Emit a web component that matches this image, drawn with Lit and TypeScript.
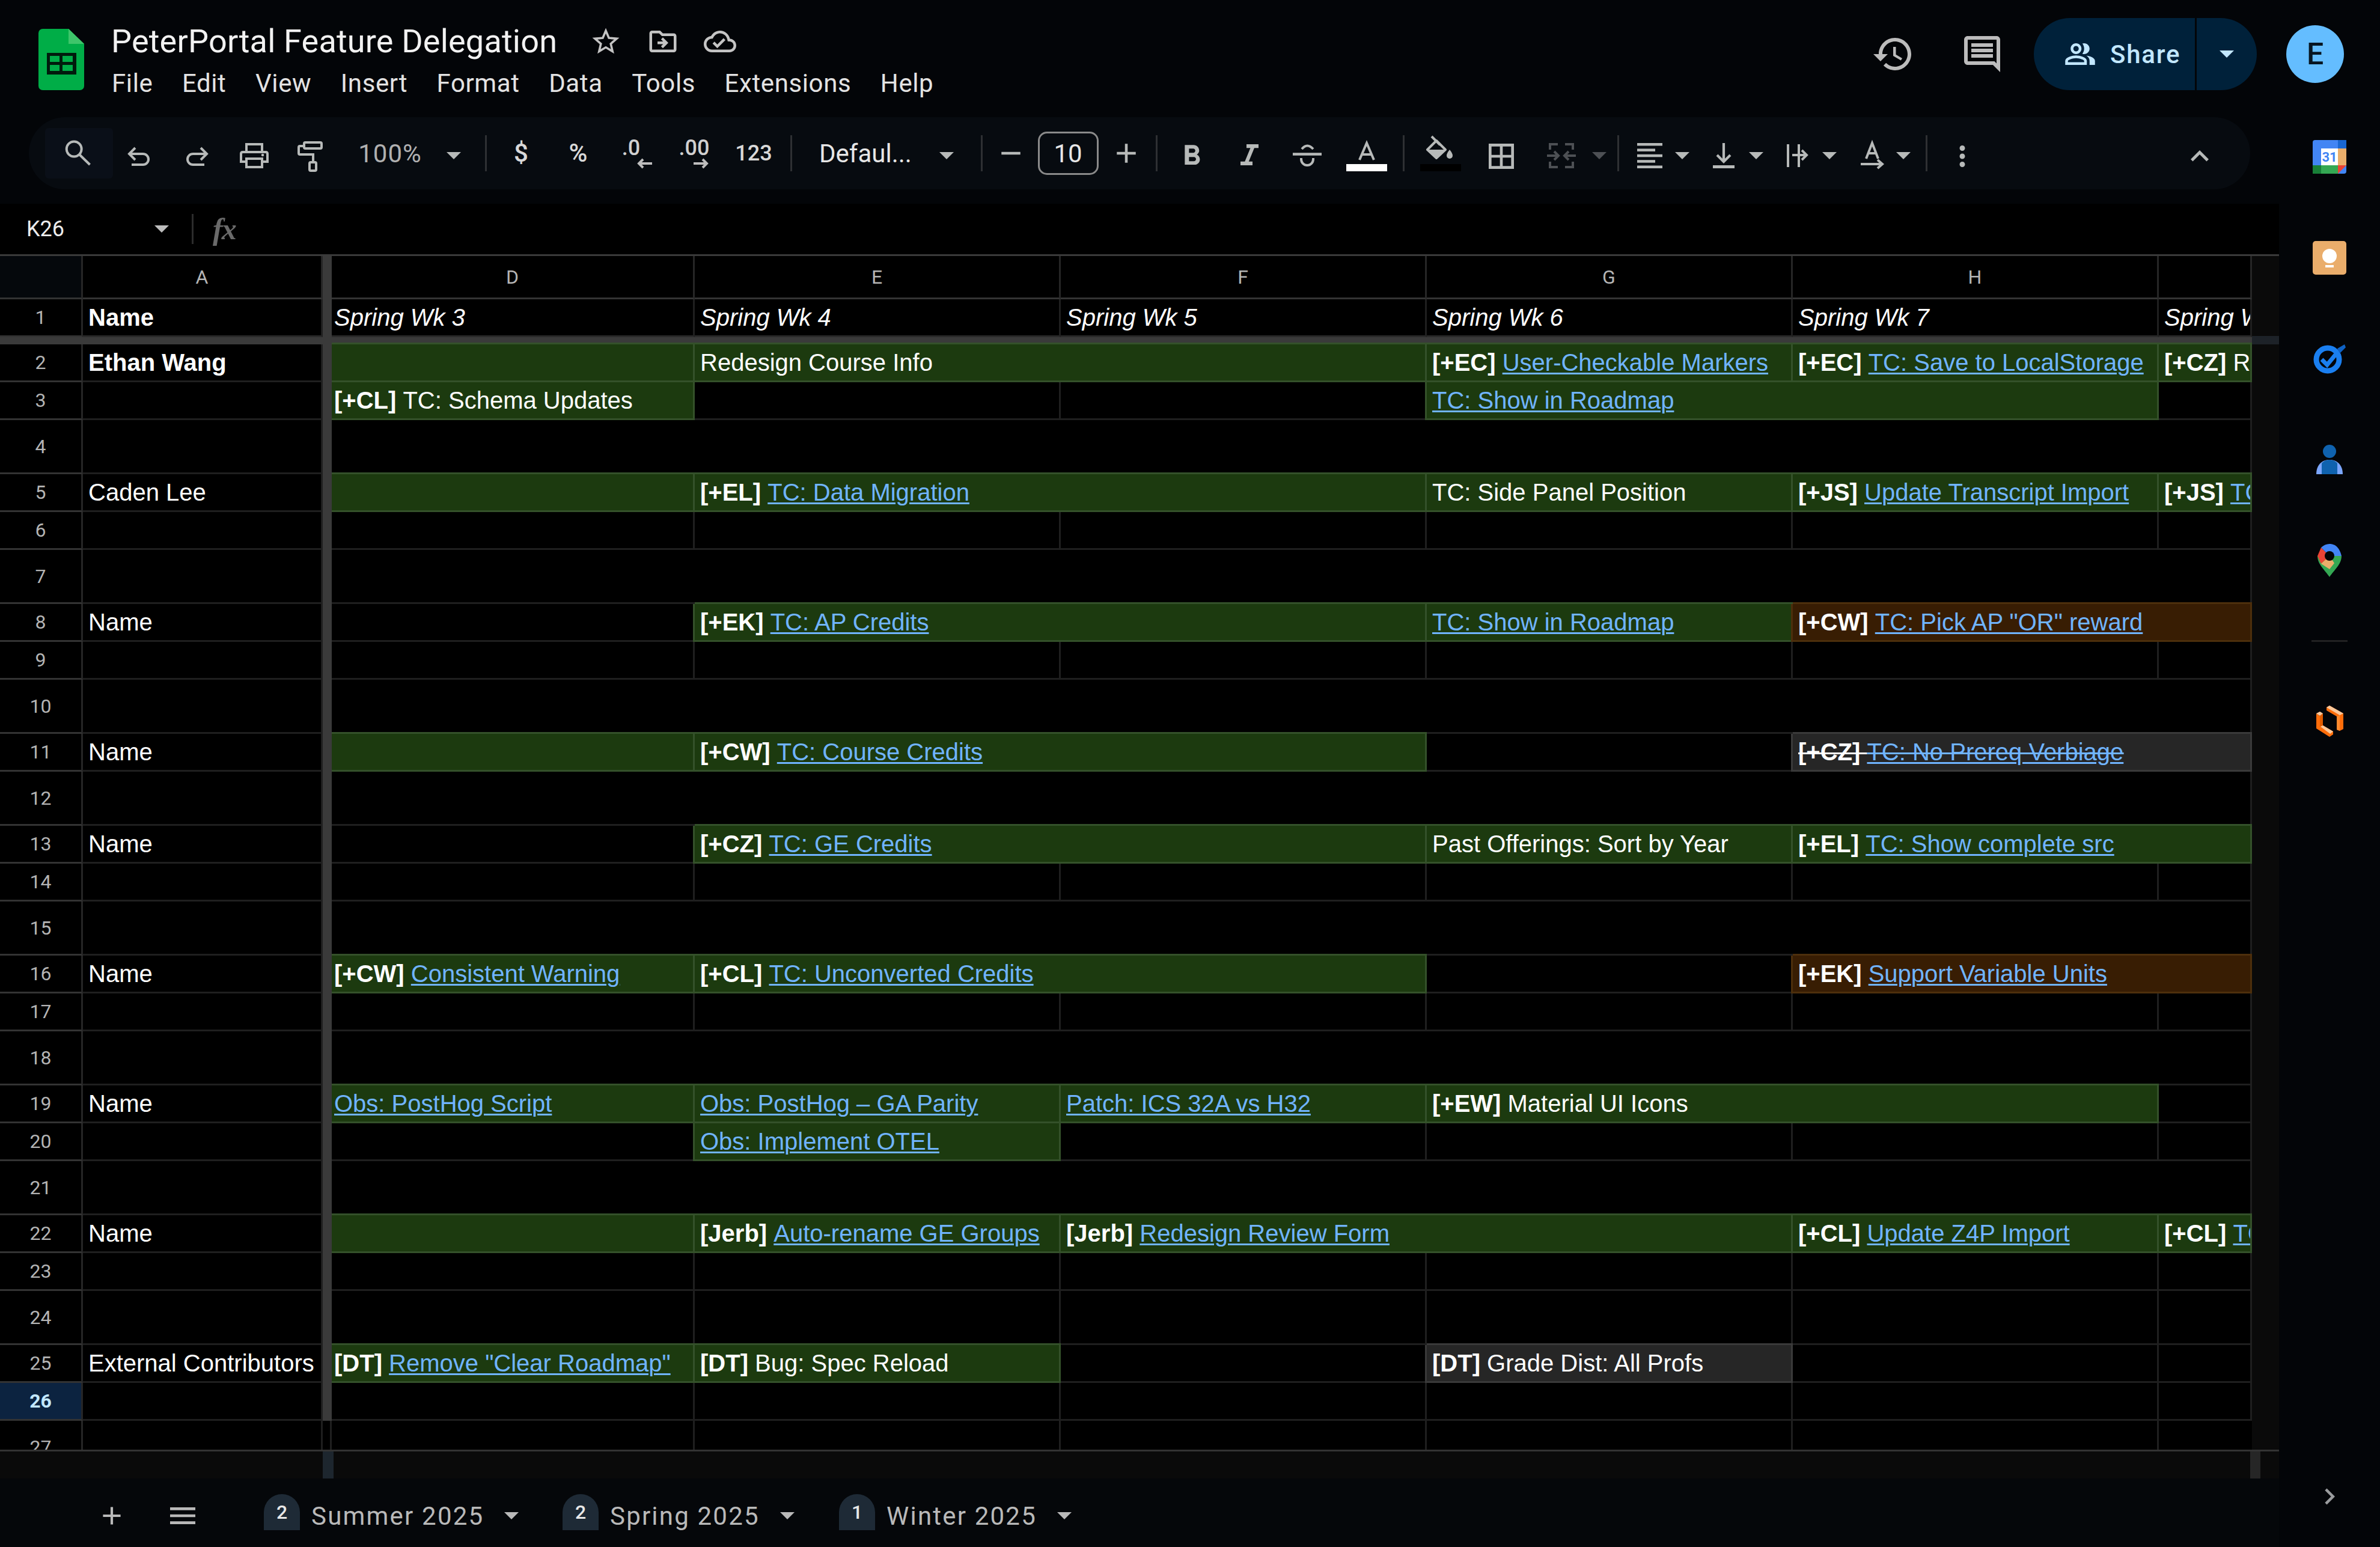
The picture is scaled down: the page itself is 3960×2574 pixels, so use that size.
import { LitElement, html, css, nothing } from "lit";
import { customElement } from "lit/decorators.js";

const P: Record<string, string> = {
  bold: "M15.6 10.79c.97-.67 1.65-1.77 1.65-2.79 0-2.26-1.75-4-4-4H7v14h7.04c2.09 0 3.71-1.7 3.71-3.79 0-1.52-.86-2.82-2.15-3.42zM10 6.5h3c.83 0 1.5.67 1.5 1.5s-.67 1.5-1.5 1.5h-3v-3zm3.5 9H10v-3h3.5c.83 0 1.5.67 1.5 1.5s-.67 1.5-1.5 1.5z",
  italic: "M10 4v2.500h2.600l-3.700 9H6V18h8v-2.500h-2.500l3.700-9H18V4z",
  borders: "M3 3v18h18V3H3zm8 16H5v-6h6v6zm0-8H5V5h6v6zm8 8h-6v-6h6v6zm0-8h-6V5h6v6z",
  more: "M12 8c1.1 0 2-.9 2-2s-.9-2-2-2-2 .9-2 2 .9 2 2 2zm0 2c-1.1 0-2 .9-2 2s.9 2 2 2 2-.9 2-2-.9-2-2-2zm0 6c-1.1 0-2 .9-2 2s.9 2 2 2 2-.9 2-2-.9-2-2-2z",
  less: "M12 8l-6 6 1.41 1.41L12 10.83l4.59 4.58L18 14z",
  right: "M8.59 16.59L13.17 12 8.59 7.41 10 6l6 6-6 6z",
  history: "M13 3c-4.97 0-9 4.03-9 9H1l3.89 3.89.07.14L9 12H6c0-3.87 3.13-7 7-7s7 3.13 7 7-3.13 7-7 7c-1.93 0-3.68-.79-4.94-2.06l-1.42 1.42C8.27 19.99 10.51 21 13 21c4.97 0 9-4.03 9-9s-4.03-9-9-9zm-1 5v5l4.28 2.54.72-1.21-3.5-2.08V8H12z",
  comment: "M22 4c0-1.1-.9-2-2-2H4c-1.1 0-2 .9-2 2v12c0 1.1.9 2 2 2h14l4 4V4zm-2 13.17L18.83 16H4V4h16v13.17zM18 6H6v2h12zm0 3H6v2h12zm0 3H6v2h12z",
  people: "M16.67 13.13C18.04 14.06 19 15.32 19 17v3h4v-3c0-2.18-3.57-3.47-6.33-3.87zM15 12c2.21 0 4-1.79 4-4s-1.79-4-4-4c-.47 0-.91.1-1.33.24C14.5 5.27 15 6.58 15 8s-.5 2.73-1.33 3.76c.42.14.86.24 1.33.24zM9 12c2.21 0 4-1.79 4-4s-1.79-4-4-4-4 1.79-4 4 1.79 4 4 4zm0-6c1.1 0 2 .9 2 2s-.9 2-2 2-2-.9-2-2 .9-2 2-2zM9 13c-2.67 0-8 1.34-8 4v3h16v-3c0-2.66-5.33-4-8-4zm6 5H3v-.99C3.2 16.29 6.3 15 9 15s5.8 1.29 6 2v1z",
  star: "M22 9.24l-7.19-.62L12 2 9.19 8.63 2 9.24l5.46 4.73L5.82 21 12 17.27 18.18 21l-1.63-7.03L22 9.24zM12 15.4l-3.76 2.27 1-4.28-3.32-2.88 4.38-.38L12 6.1l1.71 4.04 4.38.38-3.32 2.88 1 4.28L12 15.4z",
  move: "M20 6h-8l-2-2H4c-1.1 0-1.99.9-1.99 2L2 18c0 1.1.9 2 2 2h16c1.1 0 2-.9 2-2V8c0-1.1-.9-2-2-2zm0 12H4V6h5.17l2 2H20v10zm-8.01-9l-1.41 1.41L12.16 12H8v2h4.16l-1.59 1.59L11.99 17 16 13.01 11.99 9z",
  cloud: "M19.35 10.04C18.67 6.59 15.64 4 12 4 9.11 4 6.6 5.64 5.35 8.04 2.34 8.36 0 10.91 0 14c0 3.31 2.69 6 6 6h13c2.76 0 5-2.24 5-5 0-2.64-2.05-4.78-4.65-4.96zM19 18H6c-2.21 0-4-1.79-4-4 0-2.05 1.53-3.76 3.56-3.97l1.07-.11.5-.95C8.08 7.14 9.94 6 12 6c2.62 0 4.88 1.86 5.39 4.43l.3 1.5 1.53.11c1.56.1 2.78 1.41 2.78 2.96 0 1.65-1.35 3-3 3zm-9-3.82l-2.09-2.09L6.5 13.5 10 17l6.01-6.01-1.41-1.41z",
  plus: "M19 13h-6v6h-2v-6H5v-2h6V5h2v6h6z",
  minus: "M19 13H5v-2h14z",
  menu: "M3 18h18v-2H3v2zm0-5h18v-2H3v2zm0-7v2h18V6H3z",
};

const ic = (n: string, cls = "i60") =>
  html`<svg class="${cls}" viewBox="0 0 24 24" fill="currentColor"><path d="${P[n]}"></path></svg>`;
const caret = () => html`<svg class="caret" viewBox="0 0 24 12" fill="currentColor"><path d="M0 0h24L12 12z"></path></svg>`;

const searchI = html`<svg class="s54" viewBox="0 0 54 54"><g class="st"><circle cx="23.200" cy="20" r="12.500"></circle><path d="M31.500 28.500L49.500 46"></path></g></svg>`;
const undoI = (cls = "") => html`<svg class="s54 ${cls}" viewBox="0 0 54 54"><g class="st"><path d="M21 18L11 28l10 10"></path><path d="M11 28h23a9 9 0 0 1 0 18H15"></path></g></svg>`;
const printI = html`<svg class="s54" viewBox="0 0 54 54"><g class="st"><path d="M14 25V12h26v13"></path><path d="M12 41H5V28q0-3 3-3h38q3 0 3 3v13h-7"></path><rect x="14" y="36" width="26" height="14"></rect></g><circle cx="41" cy="30" r="2.300" fill="currentColor"></circle></svg>`;
const rollerI = html`<svg class="s60" viewBox="0 0 60 60"><g class="st"><rect x="19" y="12" width="29" height="10" rx="2"></rect><path d="M17 18h-5q-2 0-2 2v10q0 2 2 2h22v11"></path><rect x="28" y="45" width="11" height="14" rx="2"></rect></g></svg>`;
const strikeI = html`<svg class="s54" viewBox="0 0 54 54"><g class="st"><path d="M3 28.500h48" stroke-width="4.500"></path><path d="M18 20Q27 9 37 20"></path><path d="M17 35v2a10 10 0 0 0 20 0v-2"></path></g></svg>`;
const colorA = html`<svg class="aI" viewBox="0 0 28 30"><g class="st" stroke-width="4.200"><path d="M2 30L14 2l12 28"></path><path d="M7 21h14"></path></g></svg>`;
const bucket = html`<svg class="bI" viewBox="0 0 56 48"><g class="st"><path d="M21 9L6 24l15 14 15-14z" stroke-linejoin="round"></path><path d="M13 2l14 14"></path></g><path d="M6 24h30L21 38zM43 24q-5 6-5 10a5 5 0 0 0 10 0q0-4-5-10z" fill="currentColor"></path></svg>`;
const mergeI = html`<svg class="s54 d4 mergeS" viewBox="0 0 54 54"><g class="st"><path d="M21 8H8v9M33 8h13v9M21 46H8v-9M33 46h13v-9"></path><path d="M3 27h18M15 20l7 7-7 7M51 27H33M39 20l-7 7 7 7"></path></g></svg>`;
const alignI = html`<svg class="d4" width="42" height="42" viewBox="0 0 42 42" fill="currentColor"><rect width="42" height="4.500"></rect><rect y="9.400" width="30" height="4.500"></rect><rect y="18.800" width="42" height="4.500"></rect><rect y="28.200" width="30" height="4.500"></rect><rect y="37.500" width="42" height="4.500"></rect></svg>`;
const valignI = html`<svg class="d4" width="36" height="42" viewBox="0 0 36 42"><rect y="37" width="36" height="5" fill="currentColor"></rect><g class="st"><path d="M18 0v29M7 20l11 11 11-11" stroke-width="4.200"></path></g></svg>`;
const wrapI = html`<svg class="d4" width="36" height="42" viewBox="0 0 36 42"><g class="st" stroke-width="3.500"><path d="M2 2v38M20 2v38"></path></g><g class="st"><path d="M9 20h22M25 12l8 8-8 8"></path></g></svg>`;
const rotateI = html`<svg class="d4" width="40" height="44" viewBox="0 0 40 44"><g class="st" stroke-width="3.600"><path d="M9 27L19 1l10 26M13 18h12"></path><path d="M0 36h34M28 29l8 7-8 7"></path></g></svg>`;

type Tool = { cx: number; w: number; c: unknown; k?: string };

const ARROW_L = html`<svg class="dArrow" viewBox="0 0 26 18"><g class="st"><path d="M26 9H4M11 2L4 9l7 7"></path></g></svg>`;
const ARROW_R = html`<svg class="dArrow" viewBox="0 0 26 18"><g class="st"><path d="M0 9h22M15 2l7 7-7 7"></path></g></svg>`;

const tools: Tool[] = [
  { cx: 131.5, w: 113, k: "hl", c: searchI },
  { cx: 231, w: 54, c: undoI() },
  { cx: 328, w: 54, c: undoI("flip") },
  { cx: 423, w: 54, c: printI },
  { cx: 517, w: 60, c: rollerI },
  { cx: 649, w: 110, k: "txt dim", c: "100%" },
  { cx: 755, w: 26, c: caret() },
  { cx: 808, w: 3, k: "sep", c: nothing },
  { cx: 867, w: 50, k: "txt sym", c: "$" },
  { cx: 962, w: 50, k: "txt sym", c: "%" },
  { cx: 1058, w: 60, k: "dec left", c: html`<span>.0</span>${ARROW_L}` },
  { cx: 1155, w: 70, k: "dec right", c: html`<span>.00</span>${ARROW_R}` },
  { cx: 1254, w: 60, k: "txt num", c: "123" },
  { cx: 1316, w: 3, k: "sep", c: nothing },
  { cx: 1443, w: 160, k: "txt bright", c: "Defaul..." },
  { cx: 1575, w: 26, c: caret() },
  { cx: 1633, w: 3, k: "sep", c: nothing },
  { cx: 1682, w: 54, c: ic("minus", "i54") },
  { cx: 1777, w: 101, k: "fsize", c: "10" },
  { cx: 1874, w: 54, c: ic("plus", "i54") },
  { cx: 1924, w: 3, k: "sep", c: nothing },
  { cx: 1983, w: 56, c: ic("bold", "i56 down") },
  { cx: 2079, w: 60, c: ic("italic", "i60 down") },
  { cx: 2175, w: 54, c: strikeI },
  { cx: 2274, w: 68, k: "swatch white", c: html`${colorA}<i></i>` },
  { cx: 2335, w: 3, k: "sep", c: nothing },
  { cx: 2397, w: 68, k: "swatch black", c: html`${bucket}<i></i>` },
  { cx: 2498, w: 56, c: ic("borders", "i56 down") },
  { cx: 2598, w: 54, k: "off", c: mergeI },
  { cx: 2661, w: 26, k: "off", c: caret() },
  { cx: 2692, w: 3, k: "sep", c: nothing },
  { cx: 2745, w: 42, c: alignI },
  { cx: 2799, w: 26, c: caret() },
  { cx: 2868, w: 36, c: valignI },
  { cx: 2922, w: 26, c: caret() },
  { cx: 2991, w: 36, c: wrapI },
  { cx: 3044, w: 26, c: caret() },
  { cx: 3116, w: 40, c: rotateI },
  { cx: 3167, w: 26, c: caret() },
  { cx: 3205, w: 3, k: "sep", c: nothing },
  { cx: 3265, w: 54, c: ic("more", "i54 down") },
  { cx: 3660, w: 60, c: ic("less", "i60 down") },
];

type Seg = { t: string; b?: boolean; l?: boolean };
type Cell = { col: number; span?: number; fill?: "g" | "o" | "k"; segs?: Seg[] };

const tag = (b: string, link: string): Seg[] => [{ t: b + " ", b: true }, { t: link, l: true }];
const plain = (b: string, t: string): Seg[] => [{ t: b + " ", b: true }, { t }];

// cols: 0=D 1=E 2=F 3=G 4=H 5=I
const rows: Record<number, { a?: string; ab?: boolean; cells?: Cell[] }> = {
  2: { a: "Ethan Wang", ab: true, cells: [
    { col: 0, fill: "g" },
    { col: 1, span: 2, fill: "g", segs: [{ t: "Redesign Course Info" }] },
    { col: 3, fill: "g", segs: tag("[+EC]", "User-Checkable Markers") },
    { col: 4, fill: "g", segs: tag("[+EC]", "TC: Save to LocalStorage") },
    { col: 5, fill: "g", segs: plain("[+CZ]", "Redesign") },
  ] },
  3: { cells: [
    { col: 0, fill: "g", segs: plain("[+CL]", "TC: Schema Updates") },
    { col: 3, span: 2, fill: "g", segs: [{ t: "TC: Show in Roadmap", l: true }] },
  ] },
  4: { cells: [{ col: 0, span: 6 }] },
  5: { a: "Caden Lee", cells: [
    { col: 0, fill: "g" },
    { col: 1, span: 2, fill: "g", segs: tag("[+EL]", "TC: Data Migration") },
    { col: 3, fill: "g", segs: [{ t: "TC: Side Panel Position" }] },
    { col: 4, fill: "g", segs: tag("[+JS]", "Update Transcript Import") },
    { col: 5, fill: "g", segs: tag("[+JS]", "TC: Import") },
  ] },
  7: { cells: [{ col: 0, span: 6 }] },
  8: { a: "Name", cells: [
    { col: 1, span: 2, fill: "g", segs: tag("[+EK]", "TC: AP Credits") },
    { col: 3, fill: "g", segs: [{ t: "TC: Show in Roadmap", l: true }] },
    { col: 4, span: 2, fill: "o", segs: tag("[+CW]", 'TC: Pick AP "OR" reward') },
  ] },
  10: { cells: [{ col: 0, span: 6 }] },
  11: { a: "Name", cells: [
    { col: 0, fill: "g" },
    { col: 1, span: 2, fill: "g", segs: tag("[+CW]", "TC: Course Credits") },
    { col: 4, span: 2, fill: "k", segs: tag("[+CZ]", "TC: No Prereq Verbiage") },
  ] },
  12: { cells: [{ col: 0, span: 6 }] },
  13: { a: "Name", cells: [
    { col: 1, span: 2, fill: "g", segs: tag("[+CZ]", "TC: GE Credits") },
    { col: 3, fill: "g", segs: [{ t: "Past Offerings: Sort by Year" }] },
    { col: 4, span: 2, fill: "g", segs: tag("[+EL]", "TC: Show complete src") },
  ] },
  15: { cells: [{ col: 0, span: 6 }] },
  16: { a: "Name", cells: [
    { col: 0, fill: "g", segs: tag("[+CW]", "Consistent Warning") },
    { col: 1, span: 2, fill: "g", segs: tag("[+CL]", "TC: Unconverted Credits") },
    { col: 4, span: 2, fill: "o", segs: tag("[+EK]", "Support Variable Units") },
  ] },
  18: { cells: [{ col: 0, span: 6 }] },
  19: { a: "Name", cells: [
    { col: 0, fill: "g", segs: [{ t: "Obs: PostHog Script", l: true }] },
    { col: 1, fill: "g", segs: [{ t: "Obs: PostHog – GA Parity", l: true }] },
    { col: 2, fill: "g", segs: [{ t: "Patch: ICS 32A vs H32", l: true }] },
    { col: 3, span: 2, fill: "g", segs: plain("[+EW]", "Material UI Icons") },
  ] },
  20: { cells: [{ col: 1, fill: "g", segs: [{ t: "Obs: Implement OTEL", l: true }] }] },
  21: { cells: [{ col: 0, span: 6 }] },
  22: { a: "Name", cells: [
    { col: 0, fill: "g" },
    { col: 1, fill: "g", segs: tag("[Jerb]", "Auto-rename GE Groups") },
    { col: 2, span: 2, fill: "g", segs: tag("[Jerb]", "Redesign Review Form") },
    { col: 4, fill: "g", segs: tag("[+CL]", "Update Z4P Import") },
    { col: 5, fill: "g", segs: tag("[+CL]", "TC: Import") },
  ] },
  25: { a: "External Contributors", cells: [
    { col: 0, fill: "g", segs: tag("[DT]", 'Remove "Clear Roadmap"') },
    { col: 1, fill: "g", segs: plain("[DT]", "Bug: Spec Reload") },
    { col: 3, fill: "k", segs: plain("[DT]", "Grade Dist: All Profs") },
  ] },
};

const colTitles = ["D", "E", "F", "G", "H", ""];
const weeks = ["Spring Wk 3", "Spring Wk 4", "Spring Wk 5", "Spring Wk 6", "Spring Wk 7", "Spring Wk 8"];

@customElement("app-root")
export class AppRoot extends LitElement {
  static styles = css`
    :host { display: block; width: 3960px; height: 2574px; background: #030508; color: #fff; font-family: Roboto, "Liberation Sans", sans-serif; overflow: hidden; }
    svg { display: block; flex: none; overflow: visible; }
    .st { fill: none; stroke: currentColor; stroke-width: 4; }
    .i60, .s60 { width: 60px; height: 60px; }
    .i56 { width: 56px; height: 56px; }
    .i54, .s54 { width: 54px; height: 54px; }
    .down { transform: translateY(5px); }
    .d4 { transform: translateY(4px); }
    .flip { transform: scaleX(-1); }
    .caret { width: 24px; height: 12px; margin: 0 auto; }
    .toolbar .caret { transform: translateY(4px); }

    .top { height: 195px; display: flex; box-sizing: border-box; }
    .logo { width: 76px; height: 102px; margin: 48px 0 0 64px; flex: none; }
    .titles { margin-left: 45px; display: flex; flex-direction: column; flex: none; }
    .titleRow { display: flex; align-items: center; margin-top: 39px; height: 60px; }
    .title { font-size: 54px; font-weight: 400; letter-spacing: .2px; color: #f2f2f2; width: 740px; white-space: nowrap; line-height: 60px; }
    .tIcons { display: flex; gap: 41px; margin-left: 56px; color: #c4c4c4; }
    .menu { display: flex; margin-top: 13px; font-size: 42px; line-height: 54px; color: #e3e3e3; gap: 48.6px; margin-left: 1px; letter-spacing: .6px; }
    .tright { margin-left: auto; display: flex; align-items: center; height: 120px; margin-top: 30px; }
    .tright .hi { color: #bcbcbc; }
    .hist { width: 72px; height: 72px; margin-right: 76px; }
    .comm { width: 72px; height: 72px; margin-right: 50px; }
    .share { width: 371px; height: 120px; border-radius: 60px; background: #00213a; display: flex; align-items: center; color: #c2e7ff; }
    .shareMain { width: 271px; height: 120px; box-sizing: border-box; display: flex; align-items: center; padding-left: 50px; gap: 23px; font-size: 42px; font-weight: 500; border-right: 3px solid #030508; letter-spacing: 1.8px; }
    .shareArrow { flex: 1; display: flex; align-items: center; justify-content: center; }
    .avatar { width: 96px; height: 96px; border-radius: 50%; background: #64bdff; color: #071521; margin: 0 60px 0 49px; display: flex; align-items: center; justify-content: center; font-size: 50px; font-weight: 500; }

    .body { display: flex; height: 2379px; }
    .ws { width: 3792px; display: flex; flex-direction: column; flex: none; }
    .toolbar { height: 120px; margin: 0 48px 24px; border-radius: 60px; background: #070b10; display: flex; align-items: center; color: #b7bab9; flex: none; }
    .tool { flex: none; display: flex; align-items: center; justify-content: center; height: 100%; }
    .hl { background: #0a0f18; height: 84px; padding-right: 10px; box-sizing: border-box; border-radius: 6px; }
    .sep { width: 3px; height: 60px; background: #2e3033; }
    .txt { font-size: 42px; white-space: nowrap; }
    .dim { color: #b0b0b0; letter-spacing: 1px; }
    .sym { font-weight: 500; color: #d8d8d8; transform: translateY(-1px); }
    .num { font-size: 36px; font-weight: 500; color: #d8d8d8; }
    .bright { color: #e6e6e6; justify-content: flex-start; }
    .dec { flex-direction: column; font-size: 36px; font-weight: 500; color: #d0d0d0; line-height: 30px; padding-top: 2px; box-sizing: border-box; }
    .dec span { display: block; }
    .dArrow { width: 26px; height: 18px; margin-top: 2px; color: #bdbdbd; }
    .dec.left .dArrow { transform: translateX(14px); }
    .dec.left span { transform: translateX(-8px); }
    .dec.right .dArrow { transform: translateX(12px); }
    .fsize { border: 3px solid #8a8a8a; border-radius: 15px; height: 72px; box-sizing: border-box; font-size: 42px; color: #e6e6e6; }
    .swatch { flex-direction: column; justify-content: flex-end; padding-bottom: 30px; box-sizing: border-box; }
    .swatch i { display: block; width: 68px; height: 12px; }
    .swatch.white i { background: #fff; }
    .swatch.black i { background: #000; }
    .aI { width: 28px; height: 30px; margin-bottom: 7px; }
    .bI { width: 56px; height: 48px; }
    .off { color: #4d5054; }

    .formula { height: 84px; background: #000; display: flex; align-items: center; flex: none; }
    .nameBox { width: 319px; display: flex; align-items: center; box-sizing: border-box; padding-left: 44px; font-size: 36px; color: #ececec; }
    .nameBox span { flex: 1; }
    .nameBox .caret { margin: 0 38px 0 0; color: #bdbdbd; }
    .fdiv { width: 3px; height: 50px; background: #2c2c2c; }
    .fx { margin-left: 32px; font-family: "Liberation Serif", serif; font-style: italic; font-size: 50px; color: #6a6a6a; font-weight: 700; letter-spacing: -2px; }

    .gridWrap { display: flex; height: 1992px; border-top: 3px solid #3a3a3a; flex: none; box-sizing: border-box; }
    .gridBox { width: 3747px; flex: none; overflow: hidden; }
    .vtrack { flex: 1; background: #0a0a0a; display: flex; flex-direction: column; }
    .vtrack i { display: block; height: 14px; margin-top: 133px; background: #1d2228; }
    .grid { display: grid; grid-template-columns: 138px 399px 15px 604px 609px 609px 609px 609px 155px;
      grid-template-rows: 72px 63px 12px repeat(3, 63px 63px 90px) 63px 90px repeat(5, 63px 63px 90px); background: #000; font-family: "Liberation Sans", Arial, sans-serif; font-size: 40px; line-height: 46px; }
    .freeze { grid-column: 3; grid-row: 1 / span 28; background: #3a3a3a; }
    .bar { grid-column: 1 / -1; grid-row: 3; background: #3a3a3a; }
    .hd { display: flex; align-items: center; justify-content: center; color: #b4b4b4; font-family: Roboto, sans-serif; font-size: 32px; box-sizing: border-box; border-right: 3px solid #262626; border-bottom: 3px solid #333; line-height: 1; }
    .corner { background: #05080c; }
    .sel { background: #0c2340; color: #c2e7ff; font-weight: 700; }
    .c { box-sizing: border-box; border-right: 3px solid #1f1f1f; border-bottom: 3px solid #1f1f1f; display: flex; align-items: flex-end; padding: 0 0 7px 9px; white-space: pre; overflow: hidden; color: #fff; min-width: 0; }
    .r1 { border-bottom-color: #2a2a2a; font-style: italic; }
    .colD { padding-left: 4px; }
    .strong { font-weight: 700; font-style: normal; }
    .span2 { grid-column: span 2; }
    .span6 { grid-column: span 6; }
    .g { background: #1c3a0f; border-color: #34512a; box-shadow: 0 -3px 0 #34512a, -3px 0 0 #34512a; }
    .o { background: #381d03; border-color: #4d2f0c; box-shadow: 0 -3px 0 #4d2f0c, -3px 0 0 #4d2f0c; }
    .k { background: #262626; border-color: #3a3a3a; box-shadow: 0 -3px 0 #3a3a3a, -3px 0 0 #3a3a3a; }
    .c.colD.g { box-shadow: 0 -3px 0 #34512a; }
    .c b { font-weight: 700; }
    .c a { color: #70b4ff; text-decoration: underline; text-decoration-thickness: 3px; text-underline-offset: 3px; }
    .struck { text-decoration: line-through; text-decoration-thickness: 3px; }
    .struck a { text-decoration: underline line-through; text-decoration-thickness: 3px; }

    .hline { height: 3px; background: #333; flex: none; margin-top: -3px; position: relative; }
    .hscroll { height: 45px; background: #0a0a0a; flex: none; display: flex; }
    .hscroll .f { width: 18px; margin-left: 537px; background: #1d262e; }
    .hscroll .e { width: 17px; margin-left: 3189px; background: #262626; }
    .tabs { height: 114px; flex: none; display: flex; align-items: center; background: #05070a; color: #b9b9b9; padding: 10px 0 0 161px; box-sizing: border-box; }
    .tabPlus { width: 50px; height: 50px; }
    .tabMenu { width: 56px; height: 56px; margin-left: 65px; margin-right: 107px; }
    .tab { display: flex; align-items: center; font-size: 42px; letter-spacing: 2.2px; height: 60px; white-space: nowrap; }
    .badge { width: 60px; height: 60px; border-radius: 30px 30px 0 0; background: #1e2a36; color: #e8e8e8; display: flex; align-items: center; justify-content: center; font-size: 32px; font-weight: 500; margin-right: 19px; letter-spacing: 0; transform: translateY(-6px); flex: none; }
    .tab .caret { margin: 0 0 0 34px; }
    .t1 { width: 497px; }
    .t2 { width: 460px; }

    .side { flex: 1; display: flex; flex-direction: column; align-items: center; padding-top: 38px; }
    .sIcon { display: block; flex: none; }
    .mb112 { margin-bottom: 112px; }
    .mb115 { margin-bottom: 115px; }
    .mb118 { margin-bottom: 118px; }
    .mb116 { margin-bottom: 116px; }
    .sideDiv { width: 60px; height: 3px; background: #222; margin: 105px 0 106px; flex: none; }
    .sideSpacer { flex: 1; }
    .sideChev { color: #9a9c9e; width: 54px; height: 54px; margin-bottom: 57px; }
  `;

  render() {
    let prevEnd = 48;
    const toolEls = tools.map((t) => {
      const ml = t.cx - t.w / 2 - prevEnd;
      prevEnd = t.cx + t.w / 2;
      return html`<div class="tool ${t.k ?? ""}" style="width:${t.w}px;margin-left:${ml}px">${t.c}</div>`;
    });

    const gridCells: unknown[] = [];
    gridCells.push(html`<div class="freeze"></div><div class="bar"></div>`);
    gridCells.push(html`<div class="hd corner"></div><div class="hd">A</div>`);
    colTitles.forEach((t) => gridCells.push(html`<div class="hd">${t}</div>`));
    gridCells.push(html`<div class="hd">1</div><div class="c r1 strong">Name</div>`);
    weeks.forEach((w, i) => gridCells.push(html`<div class="c r1 ${i === 0 ? "colD" : ""}">${w}</div>`));

    for (let r = 2; r <= 27; r++) {
      const row = rows[r] ?? {};
      gridCells.push(html`<div class="hd ${r === 26 ? "sel" : ""}">${r}</div>`);
      gridCells.push(html`<div class="c ${row.ab ? "strong" : ""}">${row.a ?? ""}</div>`);
      let col = 0;
      const cells = row.cells ?? [];
      while (col < 6) {
        const cell = cells.find((x) => x.col === col);
        if (!cell) {
          gridCells.push(html`<div class="c ${col === 0 ? "colD" : ""}"></div>`);
          col++;
          continue;
        }
        const span = cell.span ?? 1;
        const struck = r === 11 && cell.col === 4;
        const content = (cell.segs ?? []).map((s) =>
          s.l ? html`<a>${s.t}</a>` : s.b ? html`<b>${s.t}</b>` : html`${s.t}`
        );
        gridCells.push(html`<div class="c ${cell.fill ?? ""} ${col === 0 ? "colD" : ""} ${span > 1 ? `span${span}` : ""}"><span class="${struck ? "struck" : ""}">${content}</span></div>`);
        col += span;
      }
    }

    return html`
      <div class="top">
        <svg class="logo" viewBox="0 0 76 102">
          <path d="M7 0h43l26 25v70a7 7 0 0 1-7 7H7a7 7 0 0 1-7-7V7a7 7 0 0 1 7-7z" fill="#00ad47"></path>
          <path d="M50 0l26 25H50z" fill="#3ec56a"></path>
          <path d="M14 40h49v36H14z M19 45v10h16V45z M40 45v10h17V45z M19 60v10h16V60z M40 60v10h17V60z" fill="#011b0d" fill-rule="evenodd"></path>
        </svg>
        <div class="titles">
          <div class="titleRow">
            <div class="title">PeterPortal Feature Delegation</div>
            <div class="tIcons">${ic("star", "i54")}${ic("move", "i54")}${ic("cloud", "i54")}</div>
          </div>
          <div class="menu">
            ${["File", "Edit", "View", "Insert", "Format", "Data", "Tools", "Extensions", "Help"].map((m) => html`<span>${m}</span>`)}
          </div>
        </div>
        <div class="tright">
          <span class="hi">${ic("history", "hist")}</span>
          <span class="hi">${ic("comment", "comm")}</span>
          <div class="share">
            <div class="shareMain">${ic("people", "i54")}<span>Share</span></div>
            <div class="shareArrow">${caret()}</div>
          </div>
          <div class="avatar">E</div>
        </div>
      </div>
      <div class="body">
        <div class="ws">
          <div class="toolbar">${toolEls}</div>
          <div class="formula">
            <div class="nameBox"><span>K26</span>${caret()}</div>
            <div class="fdiv"></div>
            <div class="fx">fx</div>
          </div>
          <div class="gridWrap">
            <div class="gridBox"><div class="grid">${gridCells}</div></div>
            <div class="vtrack"><i></i></div>
          </div>
          <div class="hline"></div>
          <div class="hscroll"><div class="f"></div><div class="e"></div></div>
          <div class="tabs">
            ${ic("plus", "tabPlus")}
            ${ic("menu", "tabMenu")}
            <div class="tab t1"><span class="badge">2</span>Summer 2025${caret()}</div>
            <div class="tab t2"><span class="badge">2</span>Spring 2025${caret()}</div>
            <div class="tab"><span class="badge">1</span>Winter 2025${caret()}</div>
          </div>
        </div>
        <div class="side">
          <svg class="sIcon mb112" width="56" height="56" viewBox="0 0 56 56">
            <rect width="56" height="56" rx="4" fill="#4285f4"></rect>
            <rect x="42" width="14" height="14" fill="#1967d2"></rect>
            <rect x="42" y="14" width="14" height="28" fill="#eaae6b"></rect>
            <rect y="42" width="42" height="14" fill="#34a853"></rect>
            <rect y="42" width="14" height="14" fill="#188038"></rect>
            <path d="M42 42h14L42 56z" fill="#ea4335"></path>
            <rect x="14" y="14" width="28" height="28" fill="#fff"></rect>
            <text x="28" y="36" text-anchor="middle" font-family="Roboto, sans-serif" font-size="22" font-weight="700" fill="#4285f4">31</text>
          </svg>
          <svg class="sIcon mb115" width="56" height="56" viewBox="0 0 56 56">
            <rect width="56" height="56" rx="5" fill="#eaad6b"></rect>
            <circle cx="28" cy="25" r="12" fill="#fff"></circle>
            <rect x="21" y="40" width="14" height="4" fill="#fff"></rect>
          </svg>
          <svg class="sIcon mb118" width="54" height="50" viewBox="0 0 54 50">
            <circle cx="24" cy="26" r="19" fill="none" stroke="#1a7ff0" stroke-width="9"></circle>
            <path d="M14 26l9 9 14-17" fill="none" stroke="#1a7ff0" stroke-width="7"></path>
            <path d="M40 8l12-7 2 5-10 10z" fill="#0f62c4"></path>
          </svg>
          <svg class="sIcon mb116" width="44" height="49" viewBox="0 0 44 49">
            <circle cx="22" cy="11" r="11" fill="#0f62ae"></circle>
            <path d="M0 49c0-14 8-24 22-24s22 10 22 24z" fill="#7ba6fb"></path>
            <path d="M9 49V31c3-4 8-6 13-6s10 2 13 6v18z" fill="#0f62ae"></path>
          </svg>
          <svg class="sIcon" width="40" height="55" viewBox="0 0 40 55">
            <path d="M20 55C12 43 0 34 0 20h40c0 14-12 23-20 35z" fill="#34a853"></path>
            <path d="M0 20L6 6l14 14L6 33z" fill="#ea4335"></path>
            <path d="M6 33l14-13 8 12-8 10z" fill="#eaae6b"></path>
            <path d="M6 6C10 2 15 0 20 0c8 0 16 4 20 20H20z" fill="#4285f4"></path>
            <circle cx="20" cy="20" r="8" fill="#020304"></circle>
          </svg>
          <div class="sideDiv"></div>
          <svg class="sIcon" width="45" height="52" viewBox="0 0 45 52">
            <path d="M17 3v5l17 10v22l5 2 6-3V13L22 0z" fill="#ff6d0a"></path>
            <path d="M34 18l5-2v26l-5-2z" fill="#ff8a2e"></path>
            <path d="M17 3l5-3 23 13-6 3z" fill="#fbc89b"></path>
            <path d="M0 13v25l22 14 6-4v-5L11 33V13L6 17z" fill="#ff6d0a"></path>
            <path d="M6 17l5-4v20l-4 2H6z" fill="#e25c00"></path>
            <path d="M0 13l6-3 5 3-5 4z" fill="#fbc89b"></path>
            <path d="M7 35l4-2 17 10-5 4z" fill="#fbc89b"></path>
          </svg>
          <div class="sideSpacer"></div>
          ${ic("right", "sideChev")}
        </div>
      </div>
    `;
  }
}
